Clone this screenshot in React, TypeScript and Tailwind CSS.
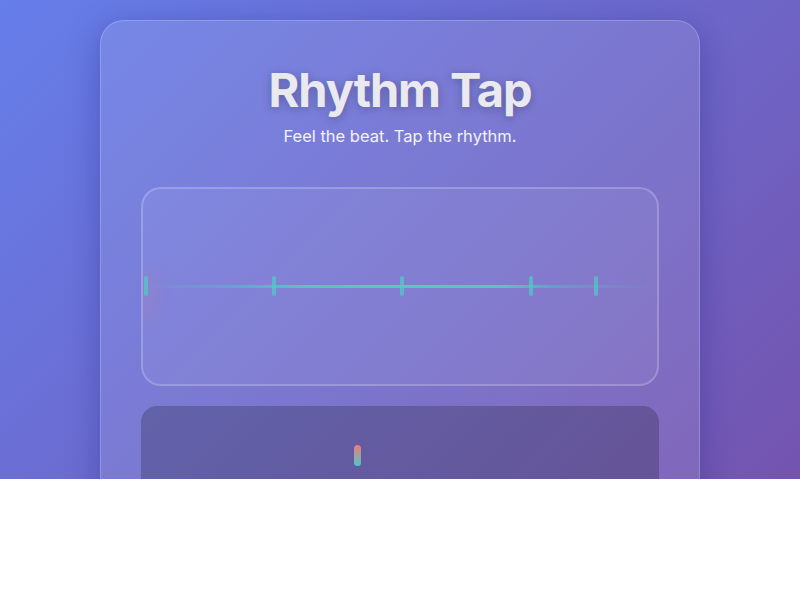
import React from "react";

const beats = [3, 131, 259, 388, 453];

export default function App() {
  return (
    <div className="w-[800px] h-[600px] bg-white" style={{ fontFamily: "Inter, 'Noto Sans', sans-serif" }}>
      <div className="relative h-[479px] overflow-hidden bg-[linear-gradient(135deg,#667eea_0%,#764ba2_100%)] bg-[length:100%_760px]">
        <div className="flex justify-center pt-5">
          <div className="w-[600px] h-[640px] rounded-[24px] border border-white/20 bg-white/10 shadow-[0_8px_32px_rgba(31,38,135,0.37)] px-10 pt-[45px] flex flex-col items-center">
            <h1 className="text-[47px] leading-[48px] font-bold text-[#e9e9ef] [text-shadow:0_2px_10px_rgba(0,0,0,0.25)] tracking-[-1.1px]">
              Rhythm Tap
            </h1>
            <p className="mt-2 text-[16.5px] leading-7 text-white/90">Feel the beat. Tap the rhythm.</p>

            <div className="relative mt-[37px] w-full h-[199px] rounded-[20px] border-2 border-white/20 bg-white/[0.06] overflow-hidden">
              <div className="absolute left-[-8px] top-[82px] w-[22px] h-[50px] rounded-full bg-[#ff6b6b]/10 blur-[8px]" />
              <div className="absolute left-0 right-0 top-[96px] h-[3px] bg-[linear-gradient(90deg,rgba(78,205,196,0)_0%,rgba(78,205,196,0.45)_20%,rgba(78,205,196,0.9)_32%,rgba(78,205,196,1)_50%,rgba(78,205,196,0.9)_70%,rgba(78,205,196,0.35)_80%,rgba(78,205,196,0)_100%)]" />
              {beats.map((x) => (
                <div
                  key={x}
                  className="absolute top-[87px] w-1 h-5 rounded-sm bg-[#4ecdc4]/70"
                  style={{ left: x - 2 }}
                />
              ))}
            </div>

            <div className="relative mt-5 w-[518px] h-[160px] rounded-2xl bg-black/20">
              <div className="absolute left-[213px] top-[39px] w-[7px] h-[21px] rounded-full bg-[linear-gradient(180deg,#f07a7a_0%,#4ec8c8_100%)]" />
            </div>
          </div>
        </div>
      </div>
    </div>
  );
}
